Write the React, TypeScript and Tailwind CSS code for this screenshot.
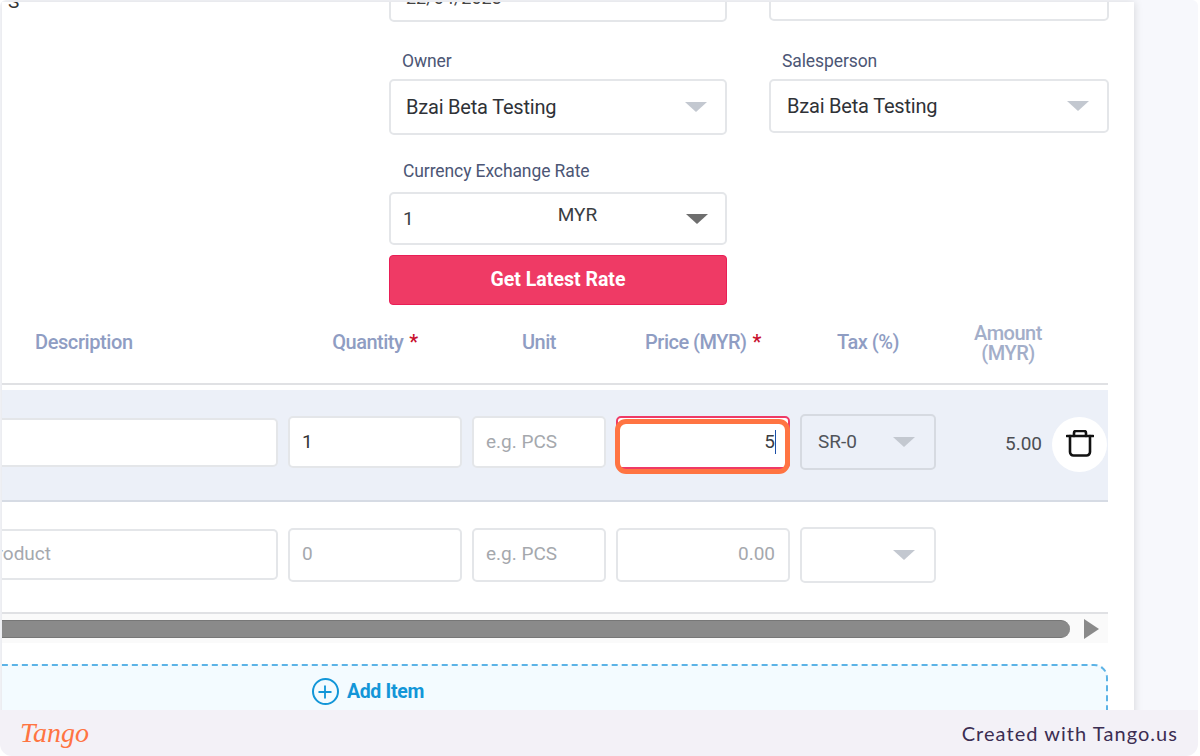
import { Plus } from 'lucide-react';

const columns = 'grid grid-cols-[276px_174px_134px_174px_136px_1fr] items-center gap-x-[10px]';

function Caret({ className = 'border-t-[#c3c8d0]' }: { className?: string }) {
  return <span className={`h-0 w-0 border-x-[11px] border-t-[10px] border-x-transparent ${className}`} />;
}

function Field({ className = '', children }: { className?: string; children?: React.ReactNode }) {
  return <div className={`flex items-center rounded-[5px] border-2 text-[19px] ${className}`}>{children}</div>;
}

const plain = 'border-[#e4e6e9] bg-white';

function Label({ children, className = '' }: { children: React.ReactNode; className?: string }) {
  return <div className={`text-[17.5px] leading-5 tracking-[-0.1px] text-[#4c5675] ${className}`}>{children}</div>;
}

function Head({ children, required }: { children: React.ReactNode; required?: boolean }) {
  return (
    <div className="pb-[2px] text-center text-[20px] font-medium leading-5 tracking-[-0.5px] text-[#8f9dc3]">
      {children}
      {required && <span className="ml-1.5 text-[#c8102e]">*</span>}
    </div>
  );
}

function TrashIcon() {
  return (
    <svg width="28" height="28" viewBox="0 0 28 28" fill="none" stroke="#111" strokeWidth="2.6" strokeLinecap="round" strokeLinejoin="round">
      <path d="M1 6H27" />
      <path d="M8 6V3a2 2 0 0 1 2-2h8a2 2 0 0 1 2 2v3" />
      <path d="M4 6v16a3.5 3.5 0 0 0 3.5 3.5h13A3.5 3.5 0 0 0 24 22V6" />
    </svg>
  );
}

export default function App() {
  return (
    <div className="flex h-[756px] w-[1200px] flex-col overflow-hidden bg-white pr-[2px] font-['Roboto',sans-serif]">
      <div className="h-[710px] shrink-0 overflow-hidden rounded-t-[6px] bg-[#f7f8fc] pl-[2px] pt-[2px]">
        <div className="h-[740px] w-[1132px] overflow-hidden bg-white shadow-[1px_0_8px_rgba(0,0,0,0.12)]">
          {/* Top form */}
          <div className="relative -mt-[34px] grid grid-cols-[338px_340px] items-start gap-x-[42px] pl-[387px]">
            <div className="absolute left-[6px] top-[24px] text-[19px] leading-5 text-[#333]">S</div>
            <Field className={`h-[54px] justify-between px-[15px] text-[#444] ${plain}`}>
              <span className="pt-[4px] text-[18px]">22/04/2023</span>
              <span className="mb-[30px] mr-[6px] h-[20px] w-[19px] rounded-[3px] border-2 border-[#c3c8d0]" />
            </Field>
            <Field className={`h-[53px] ${plain}`} />

            <Label className="mt-[29px] pl-[13px]">Owner</Label>
            <Label className="mt-[29px] pl-[13px]">Salesperson</Label>

            <Field className={`mt-[8px] h-[56px] justify-between pl-[15px] pr-[18px] text-[20px] tracking-[-0.2px] text-[#2f3237] ${plain}`}>
              Bzai Beta Testing
              <Caret />
            </Field>
            <Field className={`mt-[8px] h-[54px] justify-between pl-[16px] pr-[18px] text-[20px] tracking-[-0.2px] text-[#2f3237] ${plain}`}>
              Bzai Beta Testing
              <Caret />
            </Field>

            <Label className="mt-[26px] pl-[14px]">Currency Exchange Rate</Label>
            <div />

            <Field className={`mt-[11px] h-[53px] justify-between pl-[12px] pr-[17px] text-[#3a3d42] ${plain}`}>
              <span className="pt-[1px]">1</span>
              <span className="ml-[144px] mr-auto pb-[6px] text-[19px]">MYR</span>
              <Caret className="border-t-[#6e6e6e]" />
            </Field>
            <div />

            <button className="mt-[10px] h-[50px] w-full rounded-[4px] border border-[#e91e56] bg-[#ef3a65] text-[19.5px] font-bold text-white">
              Get Latest Rate
            </button>
          </div>

          {/* Item table */}
          <div className="w-[1106px]">
            <div className={`${columns} mt-[18px] h-[62px] border-b-2 border-[#e0e1e4] pb-[20px]`}>
              <div className="pb-[2px] pl-[33px] text-[20px] font-medium leading-5 tracking-[-0.4px] text-[#8f9dc3]">Description</div>
              <Head required>Quantity</Head>
              <Head>Unit</Head>
              <Head required>Price (MYR)</Head>
              <Head>Tax (%)</Head>
              <div className="pr-[38px] text-center text-[20px] font-medium leading-5 tracking-[-0.5px] text-[#a3aec9]">
                Amount
                <br />
                (MYR)
              </div>
            </div>

            <div className={`${columns} mt-[5px] h-[112px] border-b-2 border-[#d6dbe4] bg-[#ecf0f8] pb-[6px]`}>
              <Field className={`h-[49px] rounded-l-none border-l-0 ${plain}`} />
              <Field className={`h-[52px] pl-[12px] text-[#333] ${plain}`}>1</Field>
              <Field className={`h-[52px] pl-[12px] text-[#a5a8ad] ${plain}`}>e.g. PCS</Field>
              <div className="relative">
                <Field className="h-[53px] justify-end border-[#ef3a65] bg-white pr-[12px] text-[#3a3d42]">
                  <span className="border-r border-[#1b4fa8] leading-6">5</span>
                </Field>
                {/* Tango step highlight */}
                <div className="absolute -left-[1px] top-[3px] h-[55px] w-[175px] rounded-[11px] border-[5px] border-[#ff7442]" />
              </div>
              <Field className="h-[56px] justify-between border-[#d6dae1] bg-[#ecf0f8] pl-[16px] pr-[19px] text-[18px] text-[#50545a]">
                SR-0
                <Caret />
              </Field>
              <div className="mt-[4px] flex items-center justify-end gap-[10px] pr-[1px]">
                <span className="text-[19px] text-[#4b4e53]">5.00</span>
                <span className="flex h-[55px] w-[55px] items-center justify-center rounded-full bg-white">
                  <TrashIcon />
                </span>
              </div>
            </div>

            <div className={`${columns} h-[112px] border-b-2 border-[#e0e1e4] pb-[5px]`}>
              <Field className={`h-[51px] justify-end overflow-hidden rounded-l-none border-l-0 pr-[225px] text-[#a5a8ad] ${plain}`}>
                <span className="-ml-[60px] whitespace-nowrap">Search product</span>
              </Field>
              <Field className={`h-[54px] pl-[12px] text-[#a5a8ad] ${plain}`}>0</Field>
              <Field className={`h-[54px] pl-[12px] text-[#a5a8ad] ${plain}`}>e.g. PCS</Field>
              <Field className={`h-[54px] justify-end pr-[13px] text-[#a5a8ad] ${plain}`}>0.00</Field>
              <Field className={`h-[56px] justify-end pr-[19px] ${plain}`}>
                <Caret />
              </Field>
              <div />
            </div>

            {/* Horizontal scrollbar */}
            <div className="flex h-[29px] items-center gap-[14px] bg-[#fafafa] pr-[9px]">
              <div className="h-[18px] flex-1 rounded-r-[9px] border-y border-[#777] bg-[#8a8a8a]" />
              <span className="h-0 w-0 border-y-[10px] border-l-[15px] border-y-transparent border-l-[#8a8a8a]" />
            </div>

            <div className="-ml-[374px] mt-[21px] flex h-[70px] items-start justify-center gap-[8px] rounded-[14px] border-2 border-dashed border-[#5cb3e6] bg-[#f3fbff] pt-[12px] text-[19.5px] font-bold leading-[28px] tracking-[-0.3px] text-[#1296d8]">
              <span className="flex h-[27px] w-[27px] items-center justify-center rounded-full border-2 border-[#1296d8]">
                <Plus size={20} strokeWidth={2.2} />
              </span>
              Add Item
            </div>
          </div>
        </div>
      </div>

      {/* Tango footer */}
      <div className="flex h-[46px] items-center justify-between rounded-b-[12px] bg-[#f3f1f7] pl-[20px] pr-[20px]">
        <span className="font-['Liberation_Serif',serif] text-[28px] italic leading-none text-[#ff7442]">Tango</span>
        <span className="font-['Lato',sans-serif] text-[20px] tracking-[1.05px] text-[#3b2d52]">Created with Tango.us</span>
      </div>
    </div>
  );
}
